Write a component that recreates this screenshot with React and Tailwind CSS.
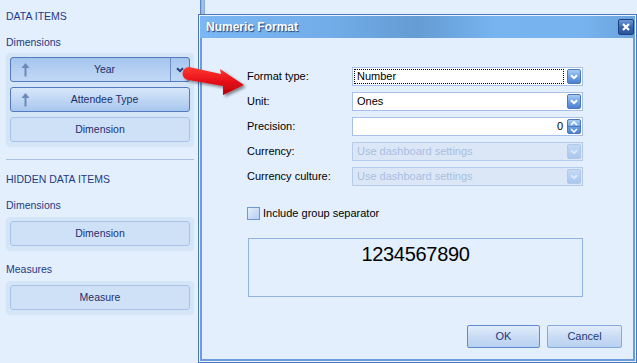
const font = { fontFamily: '"Liberation Sans", Arial, sans-serif' };

const UpArrow = () => (
  <svg width="9" height="15" viewBox="0 0 9 15">
    <path d="M4.5 3 V14.5" stroke="#6d89ba" strokeWidth="2" />
    <path d="M0.5 6 L4.5 1 L8.5 6 Z" fill="#6d89ba" />
  </svg>
);

const Chevron = ({ color = '#ffffff', w = 8 }) => (
  <svg width={w} height="6" viewBox="0 0 8 6">
    <path d="M1 1.2 L4 4.2 L7 1.2" fill="none" stroke={color} strokeWidth="2" />
  </svg>
);

const ItemButton = ({ label, dropdown, active, hot }) => {
  if (!active) {
    return (
      <div className="h-[25px] flex items-center justify-center rounded-[3px] border border-[#a9c3e7] bg-[#cfe1f7] text-[#1d2f6f]">
        {label}
      </div>
    );
  }
  return (
    <div
      className={
        'h-[25px] flex items-stretch rounded-[3px] border border-[#5479bd] text-[#1d2f6f] ' +
        (hot
          ? 'bg-[linear-gradient(to_bottom,#a5c5ee,#b7d1f3_60%,#c1d8f5)]'
          : 'bg-[linear-gradient(to_bottom,#d7e7f9,#c0d7f4_50%,#a7c7ee)]')
      }
    >
      <div className="w-[28px] flex items-center justify-center pl-px">
        <UpArrow />
      </div>
      <div className="flex-1 flex items-center justify-center">{label}</div>
      <div className={'w-[19px] flex items-center justify-center ' + (dropdown ? 'border-l border-[#6f8fc4]' : '')}>
        {dropdown && <Chevron color="#223f7c" />}
      </div>
    </div>
  );
};

const Panel = ({ children }) => (
  <div className="rounded-[4px] bg-[#d4e5f8] p-[4px] pb-[5px] flex flex-col gap-[5px]">{children}</div>
);

const Caption = ({ children, className = '' }) => (
  <div className={'h-[14px] flex items-center text-[#1e3a86] ' + className}>{children}</div>
);

const ComboBtn = ({ disabled }) => (
  <div
    className={
      'w-[14px] flex items-center justify-center rounded-[2px] border ' +
      (disabled
        ? 'border-[#b2c9ec] bg-[linear-gradient(to_bottom,#c4daf5,#a9c6ee)]'
        : 'border-[#4b77bf] bg-[linear-gradient(to_bottom,#a6cdf6,#6d9fe2_55%,#4b80d2)]')
    }
  >
    <Chevron color={disabled ? '#dce8f8' : '#ffffff'} />
  </div>
);

const Combo = ({ value, disabled, focused }) => (
  <div
    className={
      'w-[231px] h-[19px] flex p-px border ' +
      (disabled ? 'bg-[#dbe7f7] border-[#b5cbec] text-[#a8bee1]' : 'bg-white border-[#a7c1e9] text-black')
    }
  >
    <div
      className={
        'flex-1 mr-[3px] flex items-center pl-[2px] border ' +
        (focused ? 'border-dotted border-black' : 'border-transparent')
      }
    >
      {value}
    </div>
    <ComboBtn disabled={disabled} />
  </div>
);

const Spin = ({ value }) => (
  <div className="w-[231px] h-[19px] flex p-px border bg-white border-[#a7c1e9] text-black">
    <div className="flex-1 mr-[3px] flex items-center justify-end pr-[1px]">{value}</div>
    <div className="w-[14px] flex flex-col rounded-[2px] border border-[#4b77bf] bg-[linear-gradient(to_bottom,#a6cdf6,#6d9fe2_55%,#4b80d2)] overflow-hidden">
      <div className="flex-1 flex items-center justify-center border-b border-[#4b77bf]">
        <svg width="8" height="5" viewBox="0 0 8 5">
          <path d="M1 4 L4 1 L7 4" fill="none" stroke="#fff" strokeWidth="1.6" />
        </svg>
      </div>
      <div className="flex-1 flex items-center justify-center">
        <svg width="8" height="5" viewBox="0 0 8 5">
          <path d="M1 1 L4 4 L7 1" fill="none" stroke="#fff" strokeWidth="1.6" />
        </svg>
      </div>
    </div>
  </div>
);

const Row = ({ label, children }) => (
  <div className="flex items-center h-[19px]">
    <div className="w-[105px] text-black">{label}</div>
    {children}
  </div>
);

const DlgButton = ({ label, primary, w }) => (
  <div
    className={
      'h-[23px] flex items-center justify-center rounded-[2px] border text-[#1e3977] bg-[linear-gradient(to_bottom,#e2edfb,#cadcf5_50%,#b8d1f1)] ' +
      w +
      (primary ? ' border-[#5f8acb]' : ' border-[#86aade]')
    }
  >
    {label}
  </div>
);

export default function App() {
  return (
    <div className="relative h-[363px] w-[637px] overflow-hidden bg-[#e3effd] flex text-[11px]" style={font}>
      {/* Sidebar */}
      <div className="w-[198px] shrink-0 pl-[6px] pr-[4px] pt-[10px] flex flex-col text-[10.5px]">
        <Caption>DATA ITEMS</Caption>
        <Caption className="mt-[12px]">Dimensions</Caption>
        <div className="mt-[3px]">
          <Panel>
            <ItemButton label="Year" active hot dropdown />
            <ItemButton label="Attendee Type" active />
            <ItemButton label="Dimension" />
          </Panel>
        </div>
        <div className="mt-[12px] h-px bg-[#a9c1e2]" />
        <Caption className="mt-[13px]">HIDDEN DATA ITEMS</Caption>
        <Caption className="mt-[12px]">Dimensions</Caption>
        <div className="mt-[4px]">
          <Panel>
            <ItemButton label="Dimension" />
          </Panel>
        </div>
        <Caption className="mt-[12px]">Measures</Caption>
        <div className="mt-[4px]">
          <Panel>
            <ItemButton label="Measure" />
          </Panel>
        </div>
      </div>

      {/* Right area with dialog */}
      <div className="flex-1 flex flex-col">
        <div className="h-[14px] shrink-0">
          <div className="ml-[2px] w-[5px] h-full border-l border-[#5c86c4] bg-[linear-gradient(to_right,#86aee0,#a9c7ec,#7fa6da)]" />
        </div>
        <div className="flex-1 border border-[#4a77bd] p-px bg-[#eaf3fe] flex flex-col">
          <div className="h-[22px] shrink-0 flex items-center justify-between pl-[6px] pr-px bg-[linear-gradient(to_right,#7bb7f3_0%,#72ade9_30%,#649cd3_50%,#78b4f0_68%,#77b3ef_88%,#6aa3dd_100%)]">
            <span className="text-[12px] font-bold text-white [text-shadow:1px_1px_1px_#1d3f78]">Numeric Format</span>
            <div className="w-[16px] h-[16px] rounded-[2px] border border-[#1f3f82] bg-[linear-gradient(to_bottom,#6c97d6,#3863ad_55%,#2b549f)] flex items-center justify-center">
              <svg width="8" height="8" viewBox="0 0 8 8">
                <path d="M1 1 L7 7 M7 1 L1 7" stroke="#fff" strokeWidth="2.2" />
              </svg>
            </div>
          </div>
          <div className="flex-1 border-x-2 border-b-2 border-[#6c9cdb] bg-[#e3effd] pl-[45px] pt-[29px] flex flex-col">
            <div className="flex flex-col gap-[6px]">
              <Row label="Format type:">
                <Combo value="Number" focused />
              </Row>
              <Row label="Unit:">
                <Combo value="Ones" />
              </Row>
              <Row label="Precision:">
                <Spin value="0" />
              </Row>
              <Row label="Currency:">
                <Combo value="Use dashboard settings" disabled />
              </Row>
              <Row label="Currency culture:">
                <Combo value="Use dashboard settings" disabled />
              </Row>
            </div>
            <div className="mt-[21px] h-[13px] flex items-center gap-[3px]">
              <div className="w-[13px] h-[13px] border border-[#6f97d2] bg-[linear-gradient(135deg,#e4eefb,#b4cff1)]" />
              <span className="text-black">Include group separator</span>
            </div>
            <div className="mt-[18px] ml-px w-[335px] h-[59px] border border-[#93b3e3] flex justify-center pt-[3px]">
              <span className="text-[20px] leading-[24px] tracking-[-0.3px] text-black">1234567890</span>
            </div>
            <div className="mt-[28px] flex justify-end gap-[7px] pr-[11px]">
              <DlgButton label="OK" primary w="w-[73px]" />
              <DlgButton label="Cancel" w="w-[75px]" />
            </div>
          </div>
        </div>
      </div>

      {/* Red pointer arrow overlay */}
      <svg className="absolute left-[180px] top-[60px]" width="72" height="44" viewBox="0 0 72 44">
        <defs>
          <linearGradient id="ar" x1="0" y1="0" x2="0" y2="1">
            <stop offset="0" stopColor="#ff3a30" />
            <stop offset="0.5" stopColor="#e8101a" />
            <stop offset="1" stopColor="#b8000a" />
          </linearGradient>
          <filter id="sh" x="-20%" y="-20%" width="150%" height="160%">
            <feDropShadow dx="2" dy="2" stdDeviation="1.5" floodColor="#000" floodOpacity="0.45" />
          </filter>
        </defs>
        <path
          d="M9 7 L41 14 L40 9 L64 25 L43 35 L43 26 L9 20 A6.5 6.5 0 0 1 9 7 Z"
          fill="url(#ar)"
          filter="url(#sh)"
        />
      </svg>
    </div>
  );
}
